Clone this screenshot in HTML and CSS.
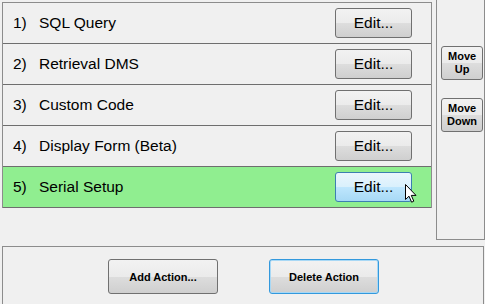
FILE: index.html
```html
<!DOCTYPE html>
<html>
<head>
<meta charset="utf-8">
<link rel="stylesheet" href="styles.css">
</head>
<body>
<div class="app">
  <div class="top">
    <div class="list">
      <div class="row"><span class="num">1)</span><span class="name">SQL Query</span><button class="edit">Edit...</button></div>
      <div class="row"><span class="num">2)</span><span class="name">Retrieval DMS</span><button class="edit">Edit...</button></div>
      <div class="row"><span class="num">3)</span><span class="name">Custom Code</span><button class="edit">Edit...</button></div>
      <div class="row"><span class="num">4)</span><span class="name">Display Form (Beta)</span><button class="edit">Edit...</button></div>
      <div class="row selected"><span class="num">5)</span><span class="name">Serial Setup</span><button class="edit hover">Edit...<svg class="cursor" width="12" height="19" viewBox="0 0 12 19"><path d="M0.5 0.5 L0.5 15.5 L4 12.2 L6.6 18.2 L8.8 17.2 L6.3 11.4 L11 11.4 Z" fill="#fff" stroke="#000" stroke-width="1" stroke-linejoin="round"/></svg></button></div>
    </div>
    <div class="side">
      <button class="move">Move<br>Up</button>
      <button class="move">Move<br>Down</button>
    </div>
  </div>
  <div class="bottom">
    <button class="action">Add Action...</button>
    <button class="action focus">Delete Action</button>
  </div>
</div>
</body>
</html>
```
FILE: styles.css
```css
html, body {
  margin: 0;
  padding: 0;
  background: #f0f0f0;
}
.app {
  width: 485px;
  height: 304px;
  overflow: hidden;
  font-family: "Liberation Sans", Arial, sans-serif;
}
.top {
  display: flex;
  align-items: flex-start;
  height: 244px;
}
.list {
  margin: 2px 0 0 2px;
  width: 429px;
  border-left: 1px solid #8c8c8c;
  border-top: 1px solid #8c8c8c;
  border-right: 1px solid #8c8c8c;
}
.row {
  height: 40px;
  border-bottom: 1px solid #6e6e6e;
  display: flex;
  align-items: center;
  font-size: 15.5px;
  color: #000;
  position: relative;
}
.row.selected {
  background: #90ee90;
}
.num {
  width: 26px;
  padding-left: 10px;
}
.name {
  flex: 1;
}
.edit {
  width: 77px;
  height: 30px;
  margin-right: 19px;
  border: 1px solid #707070;
  border-radius: 3px;
  background: linear-gradient(#f2f2f2 0%, #ebebeb 50%, #dddddd 51%, #cfcfcf 100%);
  font-family: "Liberation Sans", Arial, sans-serif;
  font-size: 15.5px;
  color: #000;
  padding: 0;
  position: relative;
}
.edit.hover {
  border-color: #3c7fb1;
  background: linear-gradient(#eaf6fd 0%, #d9f0fc 50%, #bee6fd 51%, #a7d9f5 100%);
}
.cursor {
  position: absolute;
  left: 69px;
  top: 11px;
}
.side {
  margin-left: 4px;
  width: 49px;
  height: 240px;
  border-left: 1px solid #8c8c8c;
  border-right: 1px solid #8c8c8c;
  border-bottom: 1px solid #8c8c8c;
  display: flex;
  flex-direction: column;
  align-items: flex-start;
  gap: 18px;
  padding: 46px 0 0 4px;
  box-sizing: border-box;
}
.move {
  width: 42px;
  height: 34px;
  border: 1px solid #707070;
  border-radius: 3px;
  background: linear-gradient(#f2f2f2 0%, #ebebeb 50%, #dddddd 51%, #cfcfcf 100%);
  font-family: "Liberation Sans", Arial, sans-serif;
  font-weight: bold;
  font-size: 11px;
  line-height: 13px;
  padding: 0;
  color: #000;
}
.bottom {
  margin: 2px 1px 0 2px;
  height: 60px;
  border: 1px solid #8c8c8c;
  border-bottom: none;
  display: flex;
  align-items: flex-start;
  padding: 12px 0 0 105px;
  gap: 51px;
  box-sizing: border-box;
}
.action {
  width: 110px;
  height: 35px;
  border: 1px solid #707070;
  border-radius: 3px;
  background: linear-gradient(#f2f2f2 0%, #ebebeb 50%, #dddddd 51%, #cfcfcf 100%);
  font-family: "Liberation Sans", Arial, sans-serif;
  font-weight: bold;
  font-size: 11px;
  color: #000;
  padding: 0;
}
.action.focus {
  border-color: #3399dd;
  box-shadow: inset 0 0 0 1px #a8d8f5;
}
```
